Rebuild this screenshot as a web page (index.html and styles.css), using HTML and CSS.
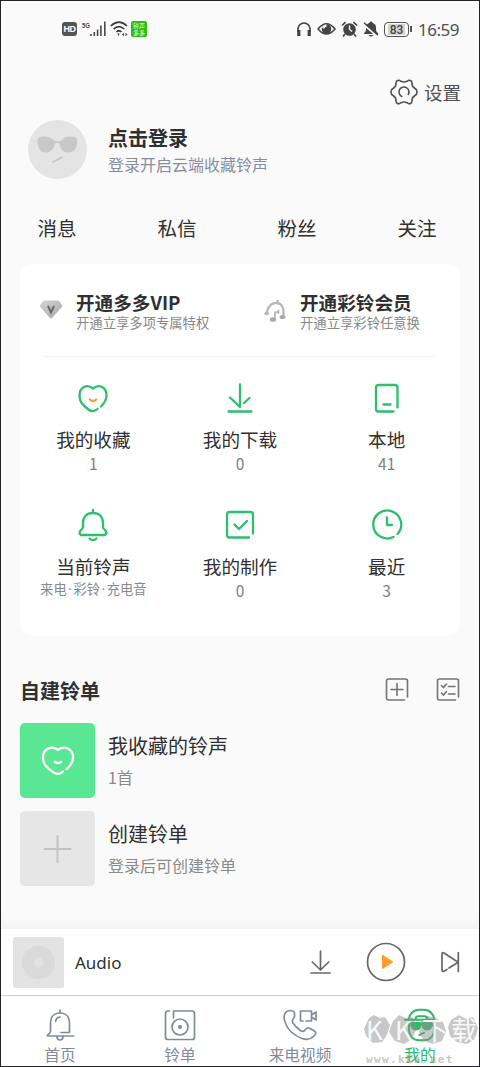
FILE: index.html
```html
<!DOCTYPE html>
<html lang="zh-CN">
<head>
<meta charset="utf-8">
<title>我的</title>
<link rel="stylesheet" href="styles.css">
</head>
<body>
<div class="phone">
  <header class="status">
    <div class="status-left">
      <span class="hd">HD</span>
      <svg class="signal" width="25" height="18" viewBox="0 0 25 18" fill="none" stroke="#484848" stroke-width="1.6"><path d="M9 16v-2M12.3 16v-4M15.6 16V9.500M18.900 16V5.500M22.800 16V1.500"/><text class="five-g" x="0" y="8" textLength="8" lengthAdjust="spacingAndGlyphs">5G</text></svg>
      <svg class="wifi" width="18" height="18" viewBox="0 0 18 18" fill="none" stroke="#3c3c3c" stroke-width="1.7"><path d="M.8 6Q9-1.800 17 6M3.700 9Q9 4.200 14.200 9M6.300 12Q9 9.500 11.500 12"/><path d="M7.300 13.500h2.400L8.500 16zM12 14.500l2-1.800v3.600zM17.500 14.500l-2-1.800v3.600z" fill="#3c3c3c" stroke="none"/></svg>
      <span class="app-badge"><span>铃声</span><span>多多</span></span>
    </div>
    <div class="status-right">
      <svg width="16" height="16" viewBox="0 0 16 16" fill="none" stroke="#444" stroke-width="1.700"><path d="M2 11V8a6 6 0 0 1 12 0v3"/><path d="M2.800 9v6M13.200 9v6" stroke-width="3.200"/></svg>
      <svg width="19" height="16" viewBox="0 0 19 16"><path d="M1 8Q9.500-2.500 18 8Q9.500 18 1 8z" fill="none" stroke="#444" stroke-width="1.500"/><circle cx="9.500" cy="8" r="4.800" fill="#444"/><path d="M9.500 8V3.400A4.600 4.600 0 0 0 5 7z" fill="#fafafa"/><circle cx="9.500" cy="7.700" r="2" fill="#444"/></svg>
      <svg width="17" height="16" viewBox="0 0 17 16"><circle cx="8.500" cy="8.500" r="6.300" fill="#444"/><path d="M1 4.500 4.500 1.200M16 4.500l-3.500-3.300M4 13l-2 2.500M13 13l2 2.500" stroke="#444" stroke-width="1.700"/><path d="M8.500 4.500v4l2.700 2" fill="none" stroke="#fafafa" stroke-width="1.300"/></svg>
      <svg width="16" height="16" viewBox="0 0 16 16"><path d="M8 .500q1.400 0 1.400 1.300c3 .900 3.600 3 3.600 5.200 0 3 .300 4 2 5v1H1v-1c1.700-1 2-2 2-5 0-2.200.600-4.300 3.600-5.200Q6.600.500 8 .500zM5.500 14h5q-2.500 3-5 0z" fill="#444"/><path d="m0 3 14 12" stroke="#fafafa" stroke-width="2"/><path d="m1 1.700 14 12.600" stroke="#444" stroke-width="1.400"/></svg>
      <span class="battery"><span class="battery-level">83</span></span>
      <span class="clock">16:59</span>
    </div>
  </header>

  <div class="settings">
    <svg width="28" height="28" viewBox="0 0 28 28" fill="none" stroke="#505050" stroke-width="1.600" stroke-linejoin="round" stroke-linecap="round"><path d="M6 5.500Q6 2 9.500 2.300L11 3.300Q14 4.600 17 3.300L18.500 2.300Q22 2 22 5.500Q22 8.600 24.700 10.300Q27 11.500 27 14T24.700 17.700Q22 19.400 22 22.500Q22 26 18.500 25.700L17 24.700Q14 23.400 11 24.700L9.500 25.700Q6 26 6 22.500Q6 19.400 3.300 17.700Q1 16.500 1 14T3.300 10.300Q6 8.600 6 5.500z"/><path d="M11.800 18.500a5 5 0 1 1 6.500-2"/></svg>
    <span>设置</span>
  </div>

  <section class="profile">
    <svg width="59" height="59" viewBox="0 0 59 59"><circle cx="29.500" cy="29.500" r="29.500" fill="#e4e4e4"/><path d="M9.500 20.500Q10 16.700 15 16.600Q22 16 26.500 20.800Q29.500 21.800 32.500 20.800Q38 15.700 44.500 16.700Q49 17 49.200 20.500C49.500 29 45.500 32.500 40 32.500Q32.500 32 31.500 23.500Q29.500 22 27 23.500Q25 32 18.500 32.500C12 32.500 9.500 28 9.500 20.500z" fill="#c8c8c8"/><path d="m25 42 9-4.700" stroke="#c4c4c4" stroke-width="1.700" stroke-linecap="round"/></svg>
    <div class="profile-text"><h1>点击登录</h1><p>登录开启云端收藏铃声</p></div>
  </section>

  <nav class="tabs"><span>消息</span><span>私信</span><span>粉丝</span><span>关注</span></nav>

  <main class="card">
    <div class="offers">
      <div class="offer">
        <svg width="24" height="22" viewBox="0 0 24 22"><defs><linearGradient id="gem" x2="1" y2="1"><stop stop-color="#d4d4d4"/><stop offset="1" stop-color="#a8a8a8"/></linearGradient></defs><path d="M5.500 1.500h13q1 0 2 1L23 6q.700 1-.200 2L13 19q-1 1-2 0L1.200 8Q.500 7 1.200 6L4 2.200q.500-.700 1.500-.700z" fill="url(#gem)"/><path d="m9 7 3 6.500L15 7" fill="none" stroke="#666" stroke-width="1.900"/></svg>
        <div><h2>开通多多VIP</h2><p>开通立享多项专属特权</p></div>
      </div>
      <div class="offer">
        <svg width="24" height="24" viewBox="0 0 24 24" fill="none" stroke="#b8b8b8" stroke-width="2.300" stroke-linecap="round"><path d="M3.500 14C5 7.500 8.500 4 13 4c6 0 8 4.500 7.500 13M14.500 2v1"/><path d="M12 20v-6.500q2.500.500 3.500-2.500v3" stroke-width="1.800"/><ellipse cx="3.700" cy="14.500" rx="2.500" ry="1.800" fill="#b8b8b8" stroke="none"/><ellipse cx="10" cy="20.500" rx="3.200" ry="2.300" fill="#aaa" stroke="none"/><ellipse cx="19.500" cy="18" rx="3" ry="2.100" fill="#aaa" stroke="none"/></svg>
        <div><h2>开通彩铃会员</h2><p>开通立享彩铃任意换</p></div>
      </div>
    </div>
    <div class="grid">
      <div class="cell"><svg width="32" height="32" viewBox="0 0 32 32"><path d="M20.500 27Q16 31 11.500 27.500C4.500 22.500 2.500 19 2.500 13.500 2.500 5 10 1.500 16 6.500 22 1.500 29.500 5 29.500 13.500c0 4-2 7.500-5.500 11" class="line"/><path d="M12.800 17.500q3.200 3 6.400 0" class="smile"/></svg><h3>我的收藏</h3><p>1</p></div>
      <div class="cell"><svg width="32" height="32" viewBox="0 0 32 32"><path d="M16 2.500V25L6 15.500M20 21l5.500-5M4.500 29.500h23" class="line"/></svg><h3>我的下载</h3><p>0</p></div>
      <div class="cell"><svg width="32" height="32" viewBox="0 0 32 32"><path d="M22.500 29.500H7.500q-2.500 0-2.500-2.500V5.500Q5 3 7.500 3h16.500q2.500 0 2.500 2.500v20M12.500 22.500h7" class="line"/></svg><h3>本地</h3><p>41</p></div>
      <div class="cell"><svg width="32" height="32" viewBox="0 0 32 32"><path d="M16 1v3M6 14C6 8 9.500 4 16 4s10 4 10 10v4q0 2 2.500 3.500Q30.500 24 28 26H4Q1.500 24 3.500 21.500 6 20 6 18zM12.500 29.500q3.500 3.200 7 0" class="line"/></svg><h3>当前铃声</h3><p class="kinds">来电<i>·</i>彩铃<i>·</i>充电音</p></div>
      <div class="cell"><svg width="32" height="32" viewBox="0 0 32 32"><path d="M25 28.500H5.500Q3 28.500 3 26V5.500Q3 3 5.500 3h21Q29 3 29 5.500V24.500M10.500 15.500l4.500 4.500 8-8" class="line"/></svg><h3>我的制作</h3><p>0</p></div>
      <div class="cell"><svg width="32" height="32" viewBox="0 0 32 32"><path d="M22.500 28A14 14 0 1 1 26.500 25M16 8.500V16h5" class="line"/></svg><h3>最近</h3><p>3</p></div>
    </div>
  </main>

  <section class="lists">
    <div class="lists-head">
      <h2>自建铃单</h2>
      <svg width="24" height="24" viewBox="0 0 24 24" class="tool"><path d="M19.500 22H3.500q-2 0-2-2V3q0-2 2-2h17q2 0 2 2v16M6 11.500h12M12 5.500v12"/></svg>
      <svg width="24" height="24" viewBox="0 0 24 24" class="tool"><path d="M19.500 22H3.500q-2 0-2-2V3q0-2 2-2h17q2 0 2 2v16M5.500 7.500l2 2 3-3.500M12.500 8.500h6.500M5.500 15l2 2 3-3.500M12.500 16h6.500"/></svg>
    </div>
    <div class="list-row">
      <div class="cover cover-fav"><svg width="34" height="34" viewBox="0 0 32 32"><path d="M20.500 26Q16 30 11.500 26.500C4 21.500 1.800 18 1.800 12.500 1.800 4.500 10 1 16 5.500 22 1 30.200 4.500 30.200 12.500c0 4-2 7.500-6 11.200M13 16.700q3 2.500 6 0"/></svg></div>
      <div><h3>我收藏的铃声</h3><p>1首</p></div>
    </div>
    <div class="list-row">
      <div class="cover cover-new"><svg width="28" height="28" viewBox="0 0 28 28"><path d="M13.500 1v26M.500 14h26"/></svg></div>
      <div><h3>创建铃单</h3><p>登录后可创建铃单</p></div>
    </div>
  </section>

  <section class="player">
    <svg width="51" height="51" viewBox="0 0 51 51"><rect width="51" height="51" rx="2.500" fill="#e3e3e3"/><circle cx="25.500" cy="25.500" r="16.500" fill="#dadada"/><circle cx="25.500" cy="25.500" r="5" fill="#e2e2e2"/></svg>
    <span class="track">Audio</span>
    <svg class="dl" width="22" height="24" viewBox="0 0 22 24"><path d="M11.500 1v19M3.300 12l8.200 8 8.200-8M2 23h19"/></svg>
    <svg class="play" width="40" height="40" viewBox="0 0 40 40"><circle cx="20" cy="20" r="18.500"/><path d="M16.500 13.500v13L26.500 20z"/></svg>
    <svg class="next" width="20" height="22" viewBox="0 0 20 22"><path d="M18.300 1.500v19M7 18.500l-3 1.800Q2 21 2 19V3Q2 1 4 2l13 8.500q1 .700 0 1.500l-8 5"/></svg>
  </section>

  <nav class="bottom">
    <div class="nav-item"><svg width="32" height="32" viewBox="0 0 32 32"><path d="M16 1v3M17 23.500h8.500V14C25.500 8 22 4 16 4S6.500 8 6.500 14v8q0 2-1.800 3Q2 27 4.500 27H29.500M11.500 12.500q.500-4 4.500-4.500M13 27.500q0 3.500 3 3.500t3-3.500"/></svg><span>首页</span></div>
    <div class="nav-item"><svg width="32" height="32" viewBox="0 0 32 32"><path d="M5.500 2H4Q1.500 2 1.500 4.500V28q0 2.500 2.500 2.500h24q2.500 0 2.500-2.500V4.500Q30.500 2 28 2H9.500v7"/><circle cx="16" cy="18" r="8"/><circle cx="16" cy="18" r="2" fill="#838a9b" stroke="none"/></svg><span>铃单</span></div>
    <div class="nav-item"><svg width="36" height="32" viewBox="0 0 36 32"><path d="M12.500 5Q13 2 8.500 1.500 2 2 2 8.500 4 23 20 29.500q7 2.500 11.500-2 4-3.500 1-5.500l-4.500-2.500q-2.500-1.500-4 .500-2.500 3.500-5 2Q13.500 18 11 14q-1.500-2.500.500-4.500 1.500-2 1-4.500zM21 12h-2.500V2H29.500V12H24M29.500 6l4.500-3v8l-4.500-3"/></svg><span>来电视频</span></div>
    <div class="nav-item active"><svg width="32" height="32" viewBox="0 0 32 32"><rect x="5" y=".800" width="25" height="30.500" rx="10"/><path d="M.800 10.800H30.500M11.500 10.500q0-3.300 3-3.300h6q3 0 3 3.300M15.500 26l4.500-2.300"/><path d="M8 13.500h8q1.500 1 3 0h8q2 0 1.500 2.500-1 5-5.500 5-4.500 0-5-5h-1q-.500 5-5 5t-5.500-5Q6 13.500 8 13.500z" fill="#2db968" stroke-width="1"/></svg><span>我的</span></div>
  </nav>

  <div class="watermark">
    <svg width="117" height="34" viewBox="0 0 117 34"><path d="M6 4 11 1 17 4 22 3 27 11 24 21 19 28 10 29 3 22 1 15zM30 7 36 1 43 4 50 3 54 14 49 25 41 30 32 27 26 18zM58 7 65 2 73 4 80 8 83 17 79 27 70 30 61 27 56 18zM88 6 96 1 103 5 110 3 115 14 112 25 104 30 94 28 87 22 85 13z"/></svg>
    <div class="watermark-name"><span>K</span><span>K</span><span>下</span><span>载</span></div>
    <div class="watermark-url">www.kkx.net</div>
  </div>
</div>
</body>
</html>
```
FILE: styles.css
```css
* { box-sizing: border-box; margin: 0; padding: 0; }
body { font-family: "Noto Sans CJK SC", sans-serif; color: #303030; }
svg { display: block; flex: none; overflow: visible; }
.phone { position: relative; width: 480px; height: 1067px; overflow: hidden; background: #fafafa; display: flex; flex-direction: column; }
.phone::after { content: ""; position: absolute; inset: 0; border: 1px solid #242226; pointer-events: none; }

.status { height: 58px; padding: 0 21px 0 62px; display: flex; align-items: center; justify-content: space-between; }
.status-left, .status-right { display: flex; align-items: center; }
.hd { width: 15px; height: 14px; border-radius: 3px; background: #555; color: #fff; font: bold 9px/14px "Liberation Sans", sans-serif; letter-spacing: -.5px; text-align: center; }
.signal { margin-left: 5px; }
.five-g { font: bold 8px "Liberation Sans", sans-serif; fill: #484848; stroke: none; }
.wifi { margin-left: 3px; }
.app-badge { width: 16px; height: 16px; margin-left: 3px; border-radius: 2px; background: #2bbf16; color: #e4ffe0; font-size: 6px; line-height: 7px; padding: 1px; text-align: center; display: grid; }
.status-right { gap: 5px; }
.battery { position: relative; width: 25px; height: 15px; margin-right: 3px; border: 1.5px solid #555; border-radius: 4px; padding: 1px; }
.battery::after { content: ""; position: absolute; right: -4px; top: 3px; width: 2px; height: 6px; background: #555; }
.battery-level { display: block; width: 17px; height: 11px; margin-left: 2px; background: #d4d4d4; font: 500 12px/12px "Roboto", sans-serif; text-align: center; color: #444; }
.clock { font: 17px/20px "Noto Sans", sans-serif; color: #505050; letter-spacing: -.5px; margin-left: 1px; width: 41px; white-space: nowrap; padding-top: 1px; }

.settings { height: 28px; margin-top: 20px; padding-right: 19px; display: flex; justify-content: flex-end; align-items: center; gap: 6px; font-size: 18.500px; line-height: 28px; color: #505050; }

.profile { height: 59px; margin-top: 14px; padding-left: 28px; display: flex; gap: 21px; }
.profile-text { padding-top: 4px; }
.profile h1 { font-size: 20px; line-height: 28px; }
.profile p { font-size: 16px; line-height: 24px; color: #888e9d; }

.tabs { height: 40px; margin-top: 29px; display: grid; grid-template-columns: repeat(4, 120px); margin-left: -3px; text-align: center; font-size: 19.500px; line-height: 40px; }

.card { width: 440px; height: 372px; margin: 16px auto 0; background: #fff; border-radius: 12px; }
.offers { height: 93px; margin: 0 25px 0 24px; border-bottom: 1px solid #f1f1f1; padding-top: 26px; display: flex; }
.offer { display: flex; width: 224px; flex: none; gap: 13px; margin-left: -5px; }
.offer + .offer { margin-left: 0; }
.offer svg { margin-top: 9px; }
.offer h2 { font-size: 18.600px; line-height: 24px; font-weight: 600; }
.offer p { font-size: 13.330px; line-height: 20px; color: #888; margin-top: -1px; }
.grid { display: grid; grid-template-columns: repeat(3, 1fr); grid-auto-rows: 127px; padding-top: 25px; }
.cell { display: flex; flex-direction: column; align-items: center; }
.cell h3 { font-size: 18.600px; line-height: 26px; font-weight: 400; margin-top: 12px; }
.cell p { font-size: 15.500px; line-height: 20px; color: #808080; margin-top: 1px; }
.cell .kinds { font-size: 13.300px; color: #888; margin-top: 0; }
.kinds i { font-style: normal; font-family: "Noto Sans", sans-serif; display: inline-block; width: 6.700px; text-align: center; }
.line { fill: none; stroke: #2cbf6c; stroke-width: 2.300; stroke-linecap: round; stroke-linejoin: round; }
.smile { fill: none; stroke: #f5a030; stroke-width: 2.200; stroke-linecap: round; }

.lists { padding: 39px 20px 0; }
.lists-head { height: 30px; display: flex; align-items: center; gap: 27px; }
.lists-head h2 { flex: 1; font-size: 20px; line-height: 30px; padding-top: 1px; }
.tool { fill: none; stroke: #747474; stroke-width: 1.600; stroke-linecap: round; }
.list-row { display: flex; gap: 13px; height: 75px; margin-top: 13px; }
.lists-head + .list-row { margin-top: 18px; }
.list-row h3 { font-size: 20px; line-height: 30px; font-weight: 400; margin-top: 8px; }
.list-row p { font-size: 16px; line-height: 24px; color: #8a8a8a; margin-top: 4px; }
.cover { width: 75px; height: 75px; border-radius: 5px; display: grid; place-items: center; }
.cover svg { fill: none; stroke-linecap: round; }
.cover-fav { background: #59e793; }
.cover-fav svg { stroke: #fff; stroke-width: 2.200; }
.cover-new { background: #e6e6e6; }
.cover-new svg { stroke: #c2c2c2; stroke-width: 2; }

.player { height: 67px; margin-top: auto; background: #fff; border-bottom: 1px solid #cfcfcf; box-shadow: 0 -4px 5px 2px #f3f3f3; display: flex; align-items: center; padding: 0 20px 0 13px; }
.track { flex: 1; margin-left: 11px; font: 17px/26px "Noto Sans", sans-serif; padding-top: 2px; }
.dl, .play, .next { fill: none; stroke: #686868; stroke-width: 1.700; stroke-linecap: round; stroke-linejoin: round; }
.play { margin-left: 35px; }
.play path { fill: #ff9c29; stroke: #ff9c29; stroke-width: 1; }
.next { margin-left: 34px; }

.bottom { height: 71px; flex: none; background: #fff; display: grid; grid-template-columns: repeat(4, 1fr); }
.nav-item { display: flex; flex-direction: column; align-items: center; padding-top: 13px; color: #838a9b; font-size: 15.700px; line-height: 22px; }
.nav-item svg { fill: none; stroke: #838a9b; stroke-width: 1.700; stroke-linecap: round; stroke-linejoin: round; }
.nav-item span { margin-top: 3px; }
.active { color: #2db968; }
.active svg { stroke: #2db968; stroke-width: 2; }

.watermark { position: absolute; left: 363px; top: 1014px; width: 117px; height: 52px; color: rgba(255, 255, 255, .9); pointer-events: none; }
.watermark svg { fill: rgba(145, 145, 145, .5); }
.watermark-name { position: absolute; left: 3px; top: 0; display: grid; grid-template-columns: 29px 27px 29px 26px; font-size: 26px; line-height: 30px; }
.watermark-url { position: absolute; left: 3px; top: 38px; font: bold 11px/16px "DejaVu Sans Mono", monospace; letter-spacing: 1.350px; color: rgba(150, 150, 150, .55); }
```
